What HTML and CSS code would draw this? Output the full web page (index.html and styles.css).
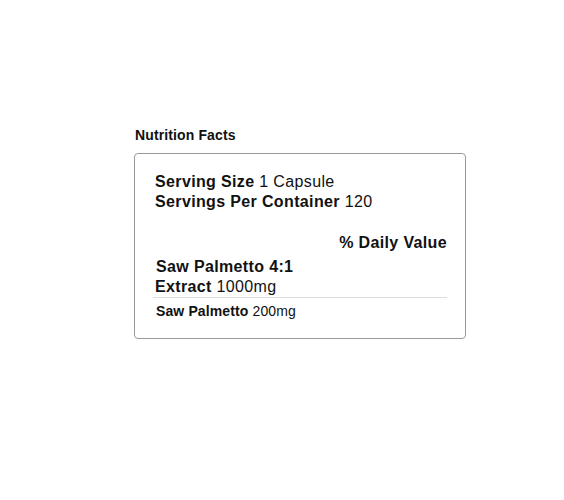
FILE: index.html
```html
<!DOCTYPE html>
<html>
<head>
<meta charset="utf-8">
<link rel="stylesheet" href="styles.css">
</head>
<body>
<div class="wrap">
  <div class="title">Nutrition Facts</div>
  <div class="box">
    <div class="line"><b>Serving Size</b> 1 Capsule</div>
    <div class="line"><b>Servings Per Container</b> 120</div>
    <div class="dv">% Daily Value</div>
    <div class="item"><div class="itext"><b>Saw Palmetto 4:1</b><br><b>Extract</b> 1000mg</div></div>
    <div class="sub"><b>Saw Palmetto</b> 200mg</div>
  </div>
</div>
</body>
</html>
```
FILE: styles.css
```css
html, body { margin: 0; padding: 0; background: #fff; }
body { font-family: "Liberation Sans", Arial, sans-serif; color: #111; }
.wrap { padding: 127px 0 0 134px; }
.title { font-size: 14px; font-weight: bold; line-height: 16px; padding-left: 1px; margin-bottom: 10px; letter-spacing: 0.12px; }
.box {
  width: 332px;
  border: 1px solid #999;
  border-radius: 4px;
  padding: 18px 18px 19px 18px;
  box-sizing: border-box;
  font-size: 16px;
  line-height: 20px;
  letter-spacing: 0.36px;
}
.line { padding-left: 2px; }
.dv { text-align: right; font-weight: bold; margin-top: 21px; }
.item { margin-top: 4px; border-bottom: 1px solid #ddd; }
.itext { padding-left: 2px; }
.itext b:first-child { padding-left: 1px; }
.sub { font-size: 14px; line-height: 16px; padding: 5px 0 0 3px; letter-spacing: 0.12px; }
```
